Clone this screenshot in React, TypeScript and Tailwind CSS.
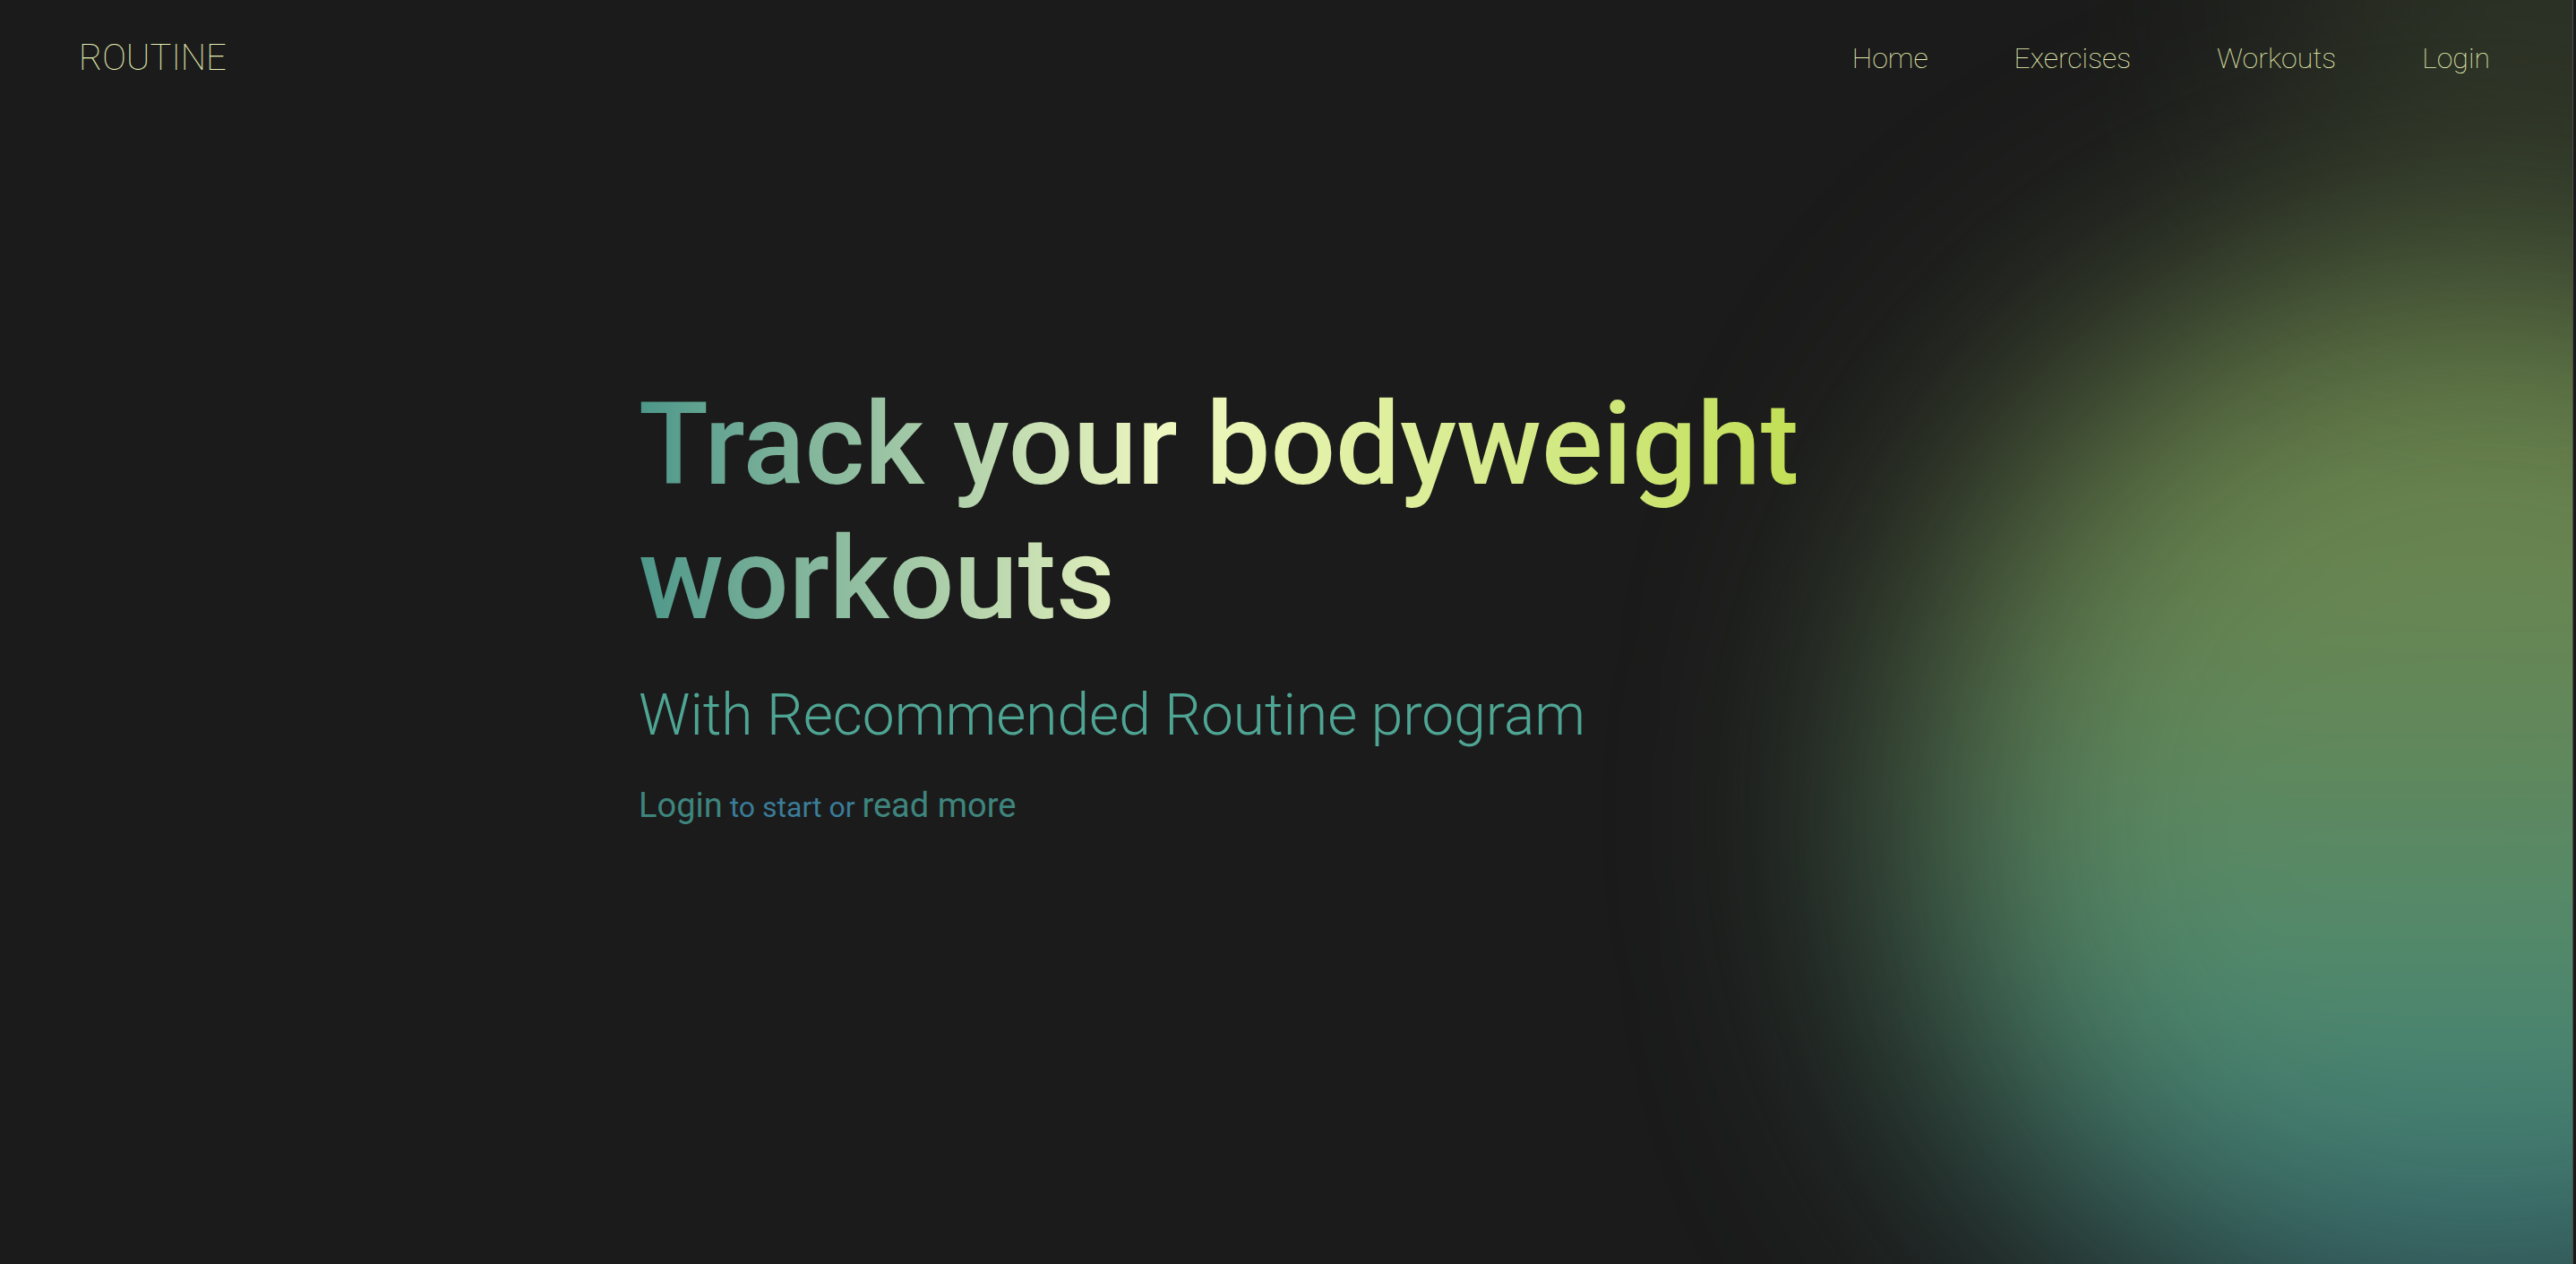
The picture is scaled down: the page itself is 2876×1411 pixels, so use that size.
const NAV = ["Home", "Exercises", "Workouts", "Login"];

export default function App() {
  return (
    <div className="flex h-[1411px] w-full overflow-hidden bg-[#1b1b1b] font-['Roboto','Liberation_Sans',sans-serif]">
      <div className="relative flex-1 overflow-hidden">
        {/* blurred colour blob on the right */}
        <div className="pointer-events-none absolute left-[2140px] top-[280px] h-[1260px] w-[1260px] rounded-full bg-linear-to-b from-[#6a854e] from-30% via-[#4b8c73] via-70% to-[#2f5a6e] blur-[150px]" />
        <div className="pointer-events-none absolute -top-[250px] left-[2550px] h-[500px] w-[600px] rounded-full bg-[#4a5a38] opacity-40 blur-[150px]" />

        <div className="relative">
          <header className="flex items-center justify-between pl-[88px] pr-[92px] pt-[41px]">
            <a className="text-[40px] font-[250] leading-[47px] text-[#e6f0b2]">ROUTINE</a>
            <nav className="flex items-center gap-[96px]">
              {NAV.map(item => (
                <a key={item} className="text-[32px] font-[250] leading-[38px] text-[#e6f0b2]">{item}</a>
              ))}
            </nav>
          </header>

          <main className="pl-[713px] pt-[333px]">
            <h1 className="w-fit bg-linear-to-r from-[#4c978a] via-[#eef7c0] via-45% to-[#c2df55] bg-clip-text text-[128px] font-medium leading-[150px] text-transparent">
              Track your bodyweight<br />workouts
            </h1>
            <p className="mt-[40px] text-[64px] font-light leading-[75px] text-[#4fa594]">
              With Recommended Routine program
            </p>
            <p className="mt-[41px] leading-[45px]">
              <a className="text-[38px] text-[#3e857e]">Login</a>
              <span className="text-[32px] text-[#3a7d99]"> to start or </span>
              <a className="text-[38px] text-[#3e857e]">read more</a>
            </p>
          </main>
        </div>
      </div>
      <div className="flex w-[4px]">
        <div className="w-px bg-[#4a4a48]" />
        <div className="flex-1 bg-[#1a1a1a]" />
      </div>
    </div>
  );
}
